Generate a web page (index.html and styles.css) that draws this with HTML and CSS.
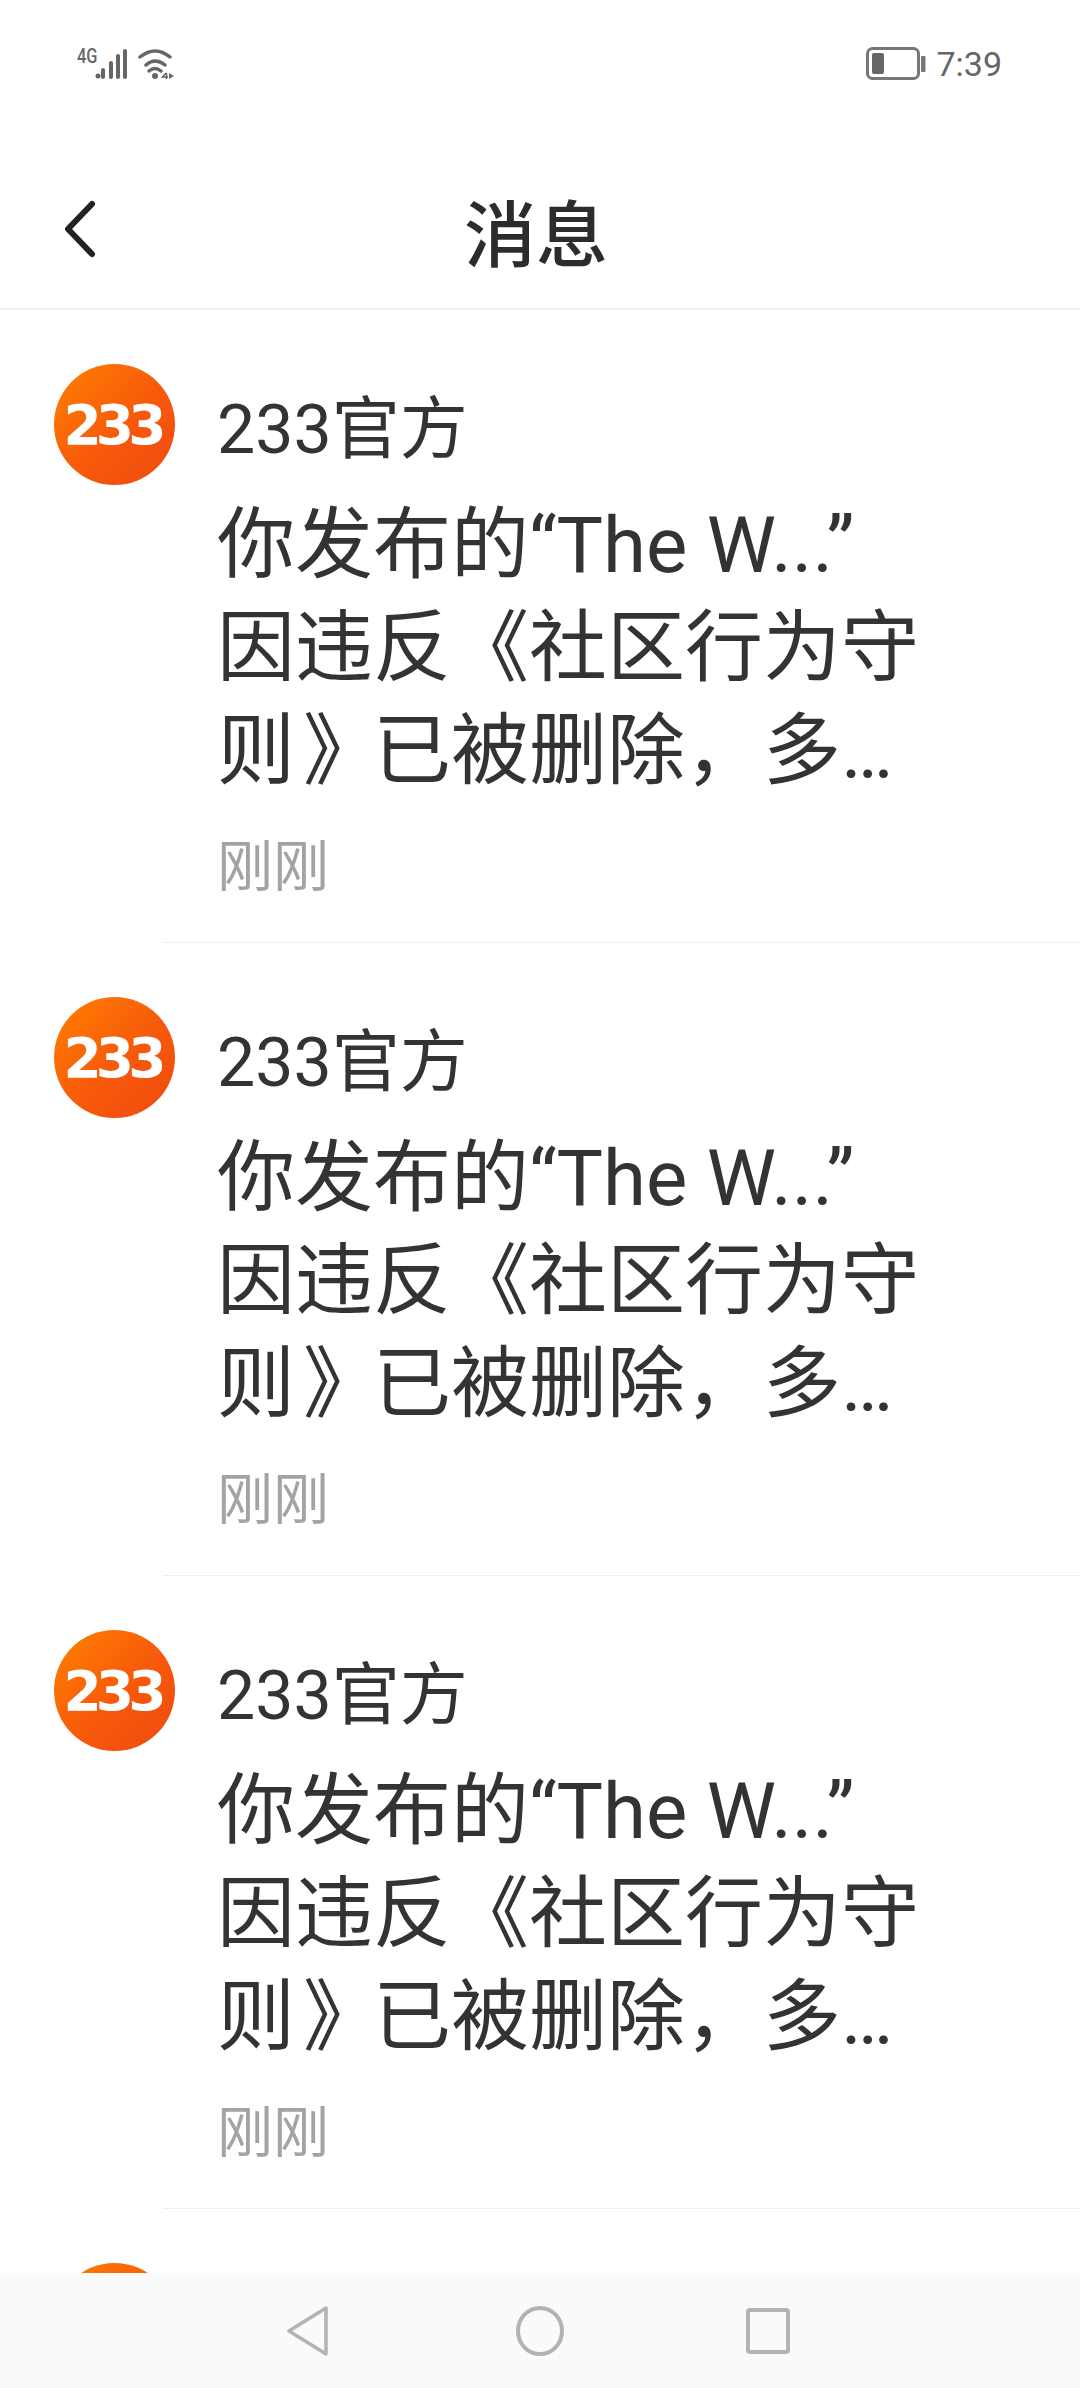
FILE: index.html
```html
<!DOCTYPE html>
<html lang="zh">
<head>
    <meta charset="UTF-8">
    <meta name="viewport" content="width=device-width, initial-scale=1.0">
    <title>消息</title>
    <link rel="stylesheet" href="styles.css">
</head>
<body>
<div class="page">
    <div class="status-bar">
        <div class="status-left">
            <span class="net-label">4G</span>
            <svg class="signal" width="33" height="32" viewBox="0 0 33 32">
                <circle cx="3" cy="28" r="2.500" fill="#666"/>
                <path d="M8 29V22M16 29V15M23 29V8M30 29V3" stroke="#666" stroke-width="4" stroke-linecap="round" fill="none"/>
            </svg>
            <svg class="wifi" width="38" height="32" viewBox="0 0 38 32">
                <path d="M3 9Q18 -3 33 9M9 17Q18 9 28 17M12 23Q18 18 24 23" stroke="#666" stroke-width="3.500" stroke-linecap="round" fill="none"/>
                <circle cx="18" cy="28" r="3" fill="#666"/>
                <path d="M29 25L25.500 29H31M29.500 25V31" stroke="#666" stroke-width="1.500" fill="none"/>
                <path d="M32 25V31L37 28Z" fill="#666"/>
            </svg>
        </div>
        <div class="status-right">
            <svg class="battery" width="60" height="33" viewBox="0 0 60 33">
                <rect x="1.500" y="1.500" width="51" height="30" rx="5" fill="none" stroke="#777" stroke-width="3"/>
                <rect x="6" y="6" width="12" height="21" rx="2" fill="#666"/>
                <rect x="55" y="9" width="4.500" height="16" rx="1" fill="#777"/>
            </svg>
            <span class="clock">7:39</span>
        </div>
    </div>

    <div class="header">
        <svg class="back" width="38" height="58" viewBox="0 0 38 58">
            <path d="M32 4L8 29L32 54" stroke="#222" stroke-width="6" stroke-linecap="round" stroke-linejoin="round" fill="none"/>
        </svg>
        <div class="title">消息</div>
    </div>

    <div class="list">
        <div class="item">
            <div class="row">
                <div class="logo"><span>233</span></div>
                <div class="content">
                    <div class="name">233官方</div>
                    <div class="text">你发布的“The W...”<br>因违反《社区行为守<br>则<span class="book-end">》</span>已被删除，多…</div>
                    <div class="time">刚刚</div>
                </div>
            </div>
            <div class="line"></div>
        </div>
        <div class="item">
            <div class="row">
                <div class="logo"><span>233</span></div>
                <div class="content">
                    <div class="name">233官方</div>
                    <div class="text">你发布的“The W...”<br>因违反《社区行为守<br>则<span class="book-end">》</span>已被删除，多…</div>
                    <div class="time">刚刚</div>
                </div>
            </div>
            <div class="line"></div>
        </div>
        <div class="item">
            <div class="row">
                <div class="logo"><span>233</span></div>
                <div class="content">
                    <div class="name">233官方</div>
                    <div class="text">你发布的“The W...”<br>因违反《社区行为守<br>则<span class="book-end">》</span>已被删除，多…</div>
                    <div class="time">刚刚</div>
                </div>
            </div>
            <div class="line"></div>
        </div>
        <div class="item">
            <div class="row">
                <div class="logo"></div>
            </div>
        </div>
    </div>

    <div class="nav-bar">
        <svg class="nav-back" width="42" height="50" viewBox="0 0 42 50">
            <path d="M39 2V48L2 25Z" fill="none" stroke="#b3b3b3" stroke-width="3.500" stroke-linejoin="round"/>
        </svg>
        <svg class="nav-home" width="48" height="50" viewBox="0 0 48 50">
            <ellipse cx="24" cy="25" rx="22" ry="23" fill="none" stroke="#b3b3b3" stroke-width="4"/>
        </svg>
        <svg class="nav-recent" width="44" height="46" viewBox="0 0 44 46">
            <rect x="2" y="2" width="40" height="42" rx="2" fill="none" stroke="#b3b3b3" stroke-width="4"/>
        </svg>
    </div>
</div>
</body>
</html>
```

FILE: styles.css
```css
* {
    margin: 0;
    padding: 0;
    box-sizing: border-box;
}

body {
    background-color: #fff;
    font-family: Roboto, "Noto Sans CJK SC", sans-serif;
}

.page {
    display: flex;
    flex-direction: column;
    width: 1080px;
    height: 2388px;
    overflow: hidden;
}

.status-bar {
    display: flex;
    justify-content: space-between;
    align-items: center;
    height: 124px;
    padding: 3px 78px 0 77px;
    flex-shrink: 0;
}

.status-left {
    display: flex;
    align-items: flex-start;
}

.net-label {
    width: 18px;
    font-size: 21px;
    font-weight: 500;
    line-height: 16px;
    color: #666;
    transform: scaleX(0.78);
    transform-origin: left;
}

.wifi {
    margin-left: 9px;
}

.status-right {
    display: flex;
    align-items: center;
    gap: 10px;
}

.clock {
    font-size: 34px;
    color: #666;
}

.header {
    display: flex;
    align-items: center;
    height: 186px;
    border-bottom: 2px solid #efefef;
    padding-left: 60px;
    padding-top: 26px;
    flex-shrink: 0;
}

.title {
    margin-left: 366px;
    font-size: 72px;
    font-weight: 500;
    color: #2c2c2c;
}

.list {
    flex: 1;
    overflow: hidden;
}

.item {
    height: 633px;
}

.row {
    display: flex;
    height: 632px;
    padding: 54px 0 0 54px;
}

.logo {
    display: flex;
    justify-content: center;
    align-items: center;
    width: 121px;
    height: 121px;
    border-radius: 50%;
    background: linear-gradient(135deg, #ff8000, #f7590b 55%, #ef4a10);
    flex-shrink: 0;
}

.logo span {
    font-family: "DejaVu Sans", sans-serif;
    font-size: 55px;
    font-weight: 700;
    letter-spacing: -6px;
    margin-left: -5px;
    color: #fff;
}

.content {
    margin-left: 42px;
}

.name {
    font-size: 68px;
    line-height: 96px;
    color: #333;
    margin-top: 18px;
}

.text {
    font-size: 78px;
    line-height: 103px;
    color: #333;
    margin-top: 16px;
}

.book-end {
    margin-left: 8px;
    letter-spacing: -8px;
}

.time {
    font-size: 56px;
    line-height: 80px;
    color: #a3a3a3;
    margin-top: 24px;
}

.line {
    height: 1px;
    margin-left: 162px;
    background-color: #eee;
}

.nav-bar {
    display: flex;
    align-items: center;
    height: 115px;
    padding-left: 287px;
    background-color: #fafafa;
    flex-shrink: 0;
}

.nav-home {
    margin-left: 187px;
}

.nav-recent {
    margin-left: 182px;
}
```
